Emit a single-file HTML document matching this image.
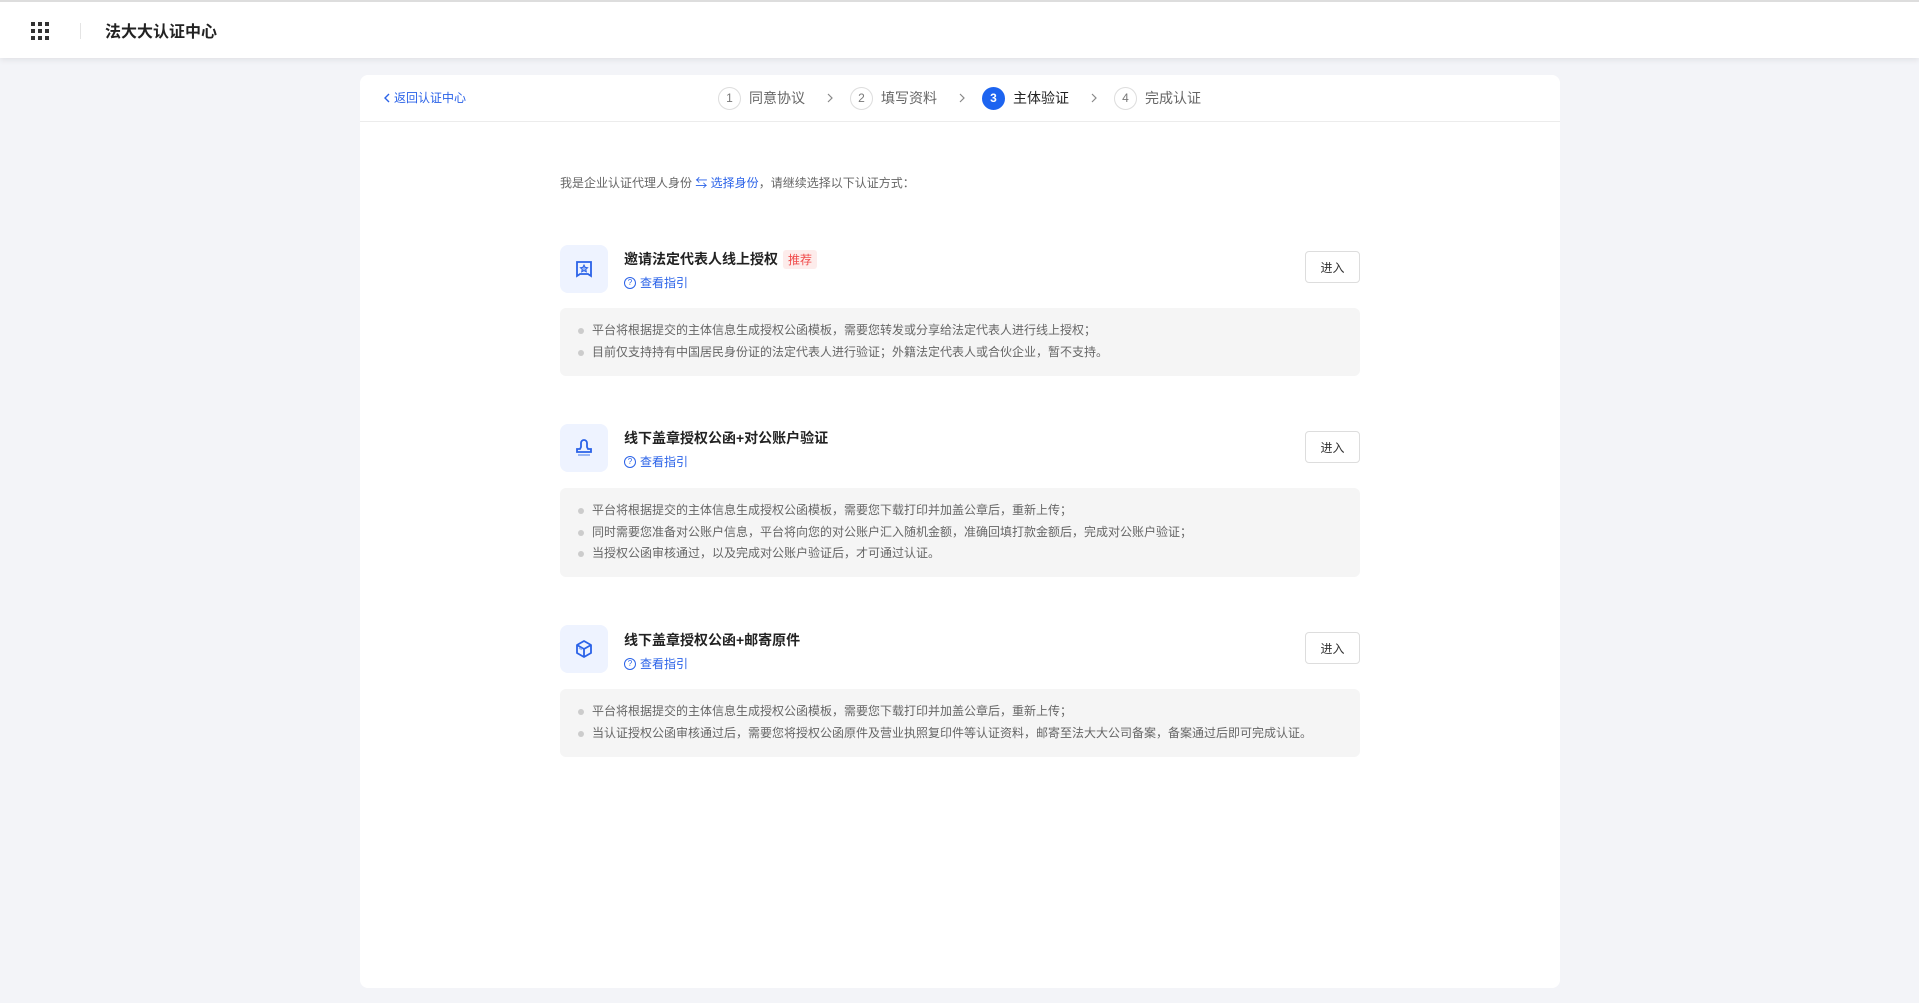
<!DOCTYPE html>
<html><head><meta charset="utf-8"><style>
*{margin:0;padding:0;box-sizing:border-box}
body{width:1919px;height:1003px;background:#f3f4f8;font-family:"Liberation Sans","Noto Sans CJK SC",sans-serif;position:relative;overflow:hidden;color:#333}
.hdr{position:absolute;left:0;top:0;width:1919px;height:58px;background:#fff;border-top:2px solid #ddd;box-shadow:0 2px 6px rgba(0,0,0,.08)}
.grid{position:absolute;left:31px;top:20px;width:18px;height:18px;display:grid;grid-template-columns:repeat(3,4px);gap:3px}
.grid i{width:4px;height:4px;background:#333;display:block}
.vd{position:absolute;left:80px;top:21px;width:1px;height:16px;background:#e4e4e4}
.title{position:absolute;left:105px;top:16px;font-size:16px;font-weight:bold;color:#222}
.card{position:absolute;left:360px;top:75px;width:1200px;height:913px;background:#fff;border-radius:8px}
.ch{position:absolute;left:0;top:46px;width:1200px;height:1px;background:#ececec}
.back{position:absolute;left:23px;top:14px;font-size:12px;color:#2a62e8;display:flex;align-items:center}
.st{position:absolute;top:11px;height:24px;display:flex;align-items:center;font-size:14px;color:#666}
.c{width:23px;height:23px;border:1px solid #ddd;border-radius:50%;font-size:12px;display:flex;align-items:center;justify-content:center;margin-right:8px;color:#777}
.c.on{background:#1d64f0;border-color:#1d64f0;color:#fff;font-weight:bold}
.chev{position:absolute;top:18px}
.a{position:absolute;font-size:12px;color:#666}
.blue{color:#2a62e8}
.ib{position:absolute;left:200px;width:48px;height:48px;background:#eef3ff;border-radius:8px;display:flex;align-items:center;justify-content:center}
.t{position:absolute;left:264px;font-size:14px;font-weight:bold;color:#222}
.tag{display:inline-block;background:#fdeceb;color:#f04b4b;font-size:12px;font-weight:normal;padding:1px 5px;border-radius:3px;margin-left:5px}
.g{position:absolute;left:264px;font-size:12px;color:#2a62e8;display:flex;align-items:center}
.g span.q{width:12px;height:12px;border:1px solid #2a62e8;border-radius:50%;font-size:8px;display:inline-flex;align-items:center;justify-content:center;margin-right:4px}
.btn{position:absolute;left:945px;width:55px;height:32px;border:1px solid #ddd;border-radius:4px;font-size:12px;color:#333;display:flex;align-items:center;justify-content:center}
.box{position:absolute;left:200px;width:800px;background:#f5f5f5;border-radius:6px;padding:12px 0 0 32px}
.box p{font-size:12px;color:#666;line-height:21.7px;position:relative}
.box p:before{content:"";position:absolute;left:-14px;top:8px;width:6px;height:6px;border-radius:50%;background:#ccc}
</style></head><body>
<div class="hdr"><div class="grid"><i></i><i></i><i></i><i></i><i></i><i></i><i></i><i></i><i></i></div><div class="vd"></div><div class="title">法大大认证中心</div></div>
<div class="card">
<div class="back"><svg width="8" height="10" viewBox="0 0 8 10" style="margin-right:3px"><path d="M6 1L2 5l4 4" fill="none" stroke="#2a62e8" stroke-width="1.4"/></svg>返回认证中心</div>
<div class="st" style="left:358px"><span class="c">1</span>同意协议</div>
<svg class="chev" style="left:466px" width="8" height="10" viewBox="0 0 8 10"><path d="M2 1l4 4-4 4" fill="none" stroke="#888" stroke-width="1.2"/></svg>
<div class="st" style="left:490px"><span class="c">2</span>填写资料</div>
<svg class="chev" style="left:598px" width="8" height="10" viewBox="0 0 8 10"><path d="M2 1l4 4-4 4" fill="none" stroke="#888" stroke-width="1.2"/></svg>
<div class="st" style="left:622px;color:#222"><span class="c on">3</span>主体验证</div>
<svg class="chev" style="left:730px" width="8" height="10" viewBox="0 0 8 10"><path d="M2 1l4 4-4 4" fill="none" stroke="#888" stroke-width="1.2"/></svg>
<div class="st" style="left:754px"><span class="c">4</span>完成认证</div>
<div class="ch"></div>
<div class="a" style="left:200px;top:99px">我是企业认证代理人身份 <span class="blue">⇆ 选择身份</span>，请继续选择以下认证方式：</div>

<div class="ib" style="top:170px"><svg width="18" height="18" viewBox="0 0 18 18" fill="none" stroke="#2a62e8" stroke-width="1.8"><path d="M2 2h14v14l-3-2H5l-3 2z"/><path d="M9 5l1.2 2.4 2.4.3-1.8 1.7.5 2.4L9 10.6 6.7 11.8l.5-2.4-1.8-1.7 2.4-.3z" stroke-width="1" fill="#8fb0f5"/></svg></div>
<div class="t" style="top:174px">邀请法定代表人线上授权<span class="tag">推荐</span></div>
<div class="g" style="top:199px"><span class="q">?</span>查看指引</div>
<div class="btn" style="top:176px">进入</div>
<div class="box" style="top:233px;height:68px"><p>平台将根据提交的主体信息生成授权公函模板，需要您转发或分享给法定代表人进行线上授权；</p><p>目前仅支持持有中国居民身份证的法定代表人进行验证；外籍法定代表人或合伙企业，暂不支持。</p></div>

<div class="ib" style="top:349px"><svg width="18" height="18" viewBox="0 0 18 18" fill="none" stroke="#2a62e8" stroke-width="1.8"><path d="M6 8V4a3 3 0 016 0v4l1 2h3v3H2v-3h3z"/><path d="M3 16h12" stroke="#8fb0f5"/></svg></div>
<div class="t" style="top:353px">线下盖章授权公函+对公账户验证</div>
<div class="g" style="top:378px"><span class="q">?</span>查看指引</div>
<div class="btn" style="top:356px">进入</div>
<div class="box" style="top:413px;height:89px"><p>平台将根据提交的主体信息生成授权公函模板，需要您下载打印并加盖公章后，重新上传；</p><p>同时需要您准备对公账户信息，平台将向您的对公账户汇入随机金额，准确回填打款金额后，完成对公账户验证；</p><p>当授权公函审核通过，以及完成对公账户验证后，才可通过认证。</p></div>

<div class="ib" style="top:550px"><svg width="20" height="20" viewBox="0 0 20 20" fill="none" stroke="#2a62e8" stroke-width="1.8" stroke-linejoin="round"><path d="M10 2l7 4v8l-7 4-7-4V6z"/><path d="M3 6l7 4 7-4M10 10v8"/><path d="M5 9l3 1.5" stroke="#8fb0f5"/></svg></div>
<div class="t" style="top:555px">线下盖章授权公函+邮寄原件</div>
<div class="g" style="top:580px"><span class="q">?</span>查看指引</div>
<div class="btn" style="top:557px">进入</div>
<div class="box" style="top:614px;height:68px"><p>平台将根据提交的主体信息生成授权公函模板，需要您下载打印并加盖公章后，重新上传；</p><p>当认证授权公函审核通过后，需要您将授权公函原件及营业执照复印件等认证资料，邮寄至法大大公司备案，备案通过后即可完成认证。</p></div>
</div>
</body></html>
